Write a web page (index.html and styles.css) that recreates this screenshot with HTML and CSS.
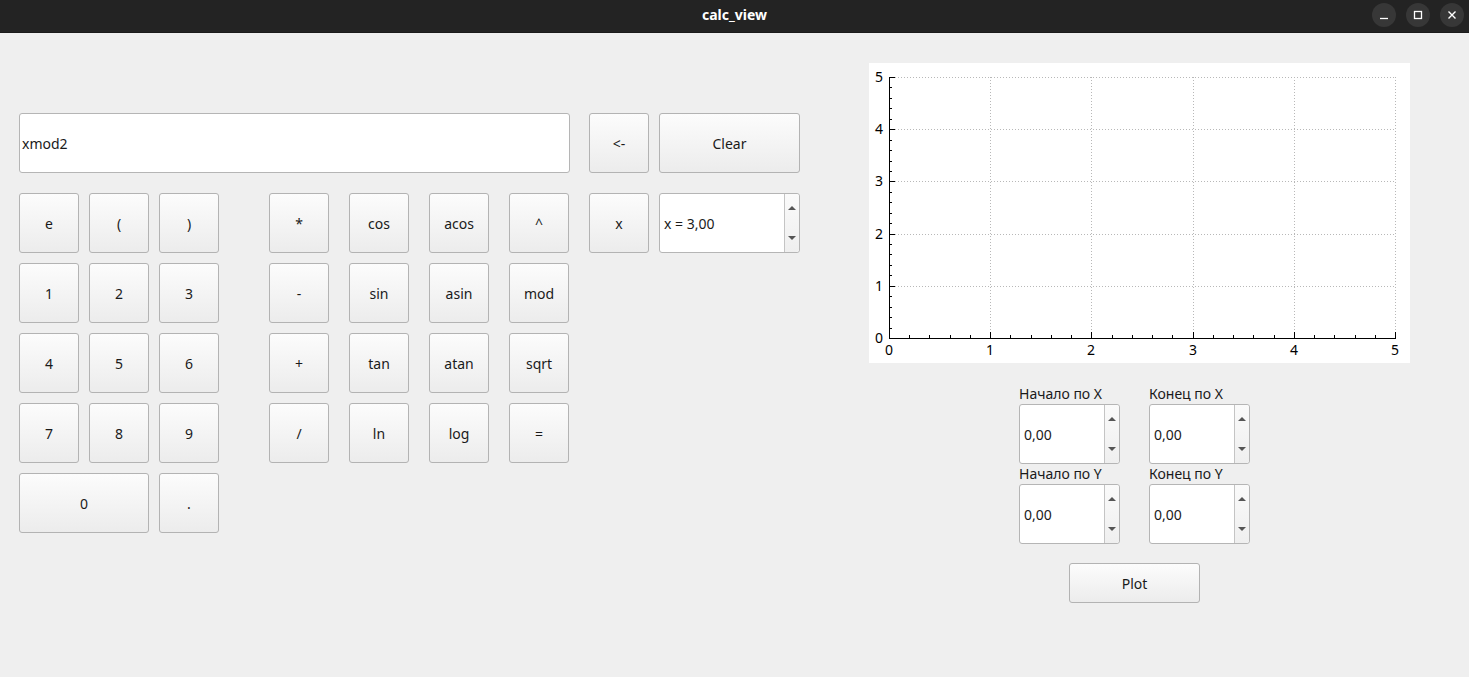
FILE: index.html
```html
<!DOCTYPE html>
<html lang="ru">
<head>
<meta charset="utf-8">
<title>calc_view</title>
<link rel="stylesheet" href="styles.css">
</head>
<body>
<header class="titlebar">
  <span class="title">calc_view</span>
  <div class="wbtns">
    <span class="wbtn"><svg width="24" height="24" viewBox="0 0 24 24"><line x1="8" y1="15.5" x2="16" y2="15.5" stroke="#fff" stroke-width="1.3"/></svg></span>
    <span class="wbtn"><svg width="24" height="24" viewBox="0 0 24 24"><rect x="8.5" y="8.5" width="7" height="7" fill="none" stroke="#fff" stroke-width="1.3"/></svg></span>
    <span class="wbtn"><svg width="24" height="24" viewBox="0 0 24 24"><path d="M8.5 8.5 L15.5 15.5 M15.5 8.5 L8.5 15.5" stroke="#fff" stroke-width="1.4"/></svg></span>
  </div>
</header>
<main class="main">
  <section class="calc">
    <div class="toprow">
      <div class="display">xmod2</div>
      <button class="btn back">&lt;-</button>
      <button class="btn wide">Clear</button>
    </div>
    <div class="row">
      <div class="grp"><button class="btn">e</button><button class="btn">(</button><button class="btn">)</button></div>
      <div class="ops"><button class="btn">*</button><button class="btn">cos</button><button class="btn">acos</button><button class="btn">^</button></div>
      <div class="var"><button class="btn">x</button>
        <div class="spin xspin"><span class="val">x = 3,00</span><span class="arrows"><i class="up"></i><i class="down"></i></span></div>
      </div>
    </div>
    <div class="row">
      <div class="grp"><button class="btn">1</button><button class="btn">2</button><button class="btn">3</button></div>
      <div class="ops"><button class="btn">-</button><button class="btn">sin</button><button class="btn">asin</button><button class="btn">mod</button></div>
    </div>
    <div class="row">
      <div class="grp"><button class="btn">4</button><button class="btn">5</button><button class="btn">6</button></div>
      <div class="ops"><button class="btn">+</button><button class="btn">tan</button><button class="btn">atan</button><button class="btn">sqrt</button></div>
    </div>
    <div class="row">
      <div class="grp"><button class="btn">7</button><button class="btn">8</button><button class="btn">9</button></div>
      <div class="ops"><button class="btn">/</button><button class="btn">ln</button><button class="btn">log</button><button class="btn">=</button></div>
    </div>
    <div class="row">
      <div class="grp"><button class="btn zero">0</button><button class="btn">.</button></div>
    </div>
  </section>
  <section class="graph">
    <svg class="plot" width="541" height="300" viewBox="0 0 541 300">
      <rect x="0" y="0" width="541" height="300" fill="#fff"/>
      <g stroke="#b8b8b8" stroke-width="1" stroke-dasharray="1 2" shape-rendering="crispEdges">
        <line x1="121" y1="14" x2="121" y2="275"/>
        <line x1="222" y1="14" x2="222" y2="275"/>
        <line x1="324" y1="14" x2="324" y2="275"/>
        <line x1="425" y1="14" x2="425" y2="275"/>
        <line x1="526" y1="14" x2="526" y2="275"/>
        <line x1="20" y1="223" x2="526" y2="223"/>
        <line x1="20" y1="171" x2="526" y2="171"/>
        <line x1="20" y1="118" x2="526" y2="118"/>
        <line x1="20" y1="66" x2="526" y2="66"/>
        <line x1="20" y1="14" x2="526" y2="14"/>
      </g>
      <g stroke="#000" stroke-width="1" shape-rendering="crispEdges">
        <line x1="20" y1="14" x2="20" y2="276"/>
        <line x1="20" y1="275" x2="527" y2="275"/>
        <line x1="121" y1="275" x2="121" y2="269"/>
        <line x1="222" y1="275" x2="222" y2="269"/>
        <line x1="324" y1="275" x2="324" y2="269"/>
        <line x1="425" y1="275" x2="425" y2="269"/>
        <line x1="526" y1="275" x2="526" y2="269"/>
        <line x1="20" y1="223" x2="26" y2="223"/>
        <line x1="20" y1="171" x2="26" y2="171"/>
        <line x1="20" y1="118" x2="26" y2="118"/>
        <line x1="20" y1="66" x2="26" y2="66"/>
        <line x1="20" y1="14" x2="26" y2="14"/>
      </g>
      <path stroke="#000" stroke-width="1" shape-rendering="crispEdges" fill="none" d="M40 275v-3M60 275v-3M81 275v-3M101 275v-3M141 275v-3M162 275v-3M182 275v-3M202 275v-3M243 275v-3M263 275v-3M283 275v-3M303 275v-3M344 275v-3M364 275v-3M384 275v-3M405 275v-3M445 275v-3M465 275v-3M486 275v-3M506 275v-3M20 265h3M20 254h3M20 244h3M20 233h3M20 212h3M20 202h3M20 191h3M20 181h3M20 160h3M20 150h3M20 139h3M20 129h3M20 108h3M20 98h3M20 87h3M20 77h3M20 56h3M20 45h3M20 35h3M20 24h3"/>
      <g class="ticklbl" text-anchor="end">
        <text x="14" y="280">0</text>
        <text x="14" y="228">1</text>
        <text x="14" y="176">2</text>
        <text x="14" y="123">3</text>
        <text x="14" y="71">4</text>
        <text x="14" y="19">5</text>
      </g>
      <g class="ticklbl" text-anchor="middle">
        <text x="20" y="292">0</text>
        <text x="121" y="292">1</text>
        <text x="222" y="292">2</text>
        <text x="324" y="292">3</text>
        <text x="425" y="292">4</text>
        <text x="526" y="292">5</text>
      </g>
    </svg>
    <div class="range">
      <div class="field"><label class="lbl">Начало по X</label>
        <div class="spin rspin"><span class="val">0,00</span><span class="arrows"><i class="up"></i><i class="down"></i></span></div></div>
      <div class="field"><label class="lbl">Конец по X</label>
        <div class="spin rspin"><span class="val">0,00</span><span class="arrows"><i class="up"></i><i class="down"></i></span></div></div>
      <div class="field"><label class="lbl">Начало по Y</label>
        <div class="spin rspin"><span class="val">0,00</span><span class="arrows"><i class="up"></i><i class="down"></i></span></div></div>
      <div class="field"><label class="lbl">Конец по Y</label>
        <div class="spin rspin"><span class="val">0,00</span><span class="arrows"><i class="up"></i><i class="down"></i></span></div></div>
    </div>
    <button class="btn plotbtn">Plot</button>
  </section>
</main>
</body>
</html>
```
FILE: styles.css
```css
* { box-sizing: border-box; }
html, body { margin: 0; padding: 0; }
body {
  width: 1469px;
  height: 677px;
  overflow: hidden;
  background: #efefef;
  font-family: "Noto Sans", "DejaVu Sans", sans-serif;
  font-size: 14px;
  color: #1a1a1a;
}
.titlebar {
  height: 33px;
  background: #232323;
  border-bottom: 1px solid #1b1b1b;
  display: flex;
  align-items: center;
  justify-content: center;
  position: relative;
}
.title {
  color: #fff;
  font-weight: bold;
  font-size: 14px;
  margin-top: -3px;
}
.wbtns {
  position: absolute;
  right: 5px;
  top: 3px;
  display: flex;
  gap: 10px;
}
.wbtn {
  width: 24px;
  height: 24px;
  border-radius: 50%;
  background: #373737;
  display: flex;
}
.main {
  display: flex;
  align-items: flex-start;
}
.calc {
  margin-left: 19px;
  margin-top: 80px;
  width: 781px;
  display: flex;
  flex-direction: column;
  gap: 10px;
}
.toprow {
  display: flex;
  margin-bottom: 10px;
}
.display {
  width: 551px;
  height: 60px;
  background: #fff;
  border: 1px solid #b5b5b5;
  border-radius: 3px;
  padding-left: 2px;
  display: flex;
  align-items: center;
}
.btn {
  width: 60px;
  height: 60px;
  padding: 0;
  margin: 0;
  border: 1px solid #b3b3b3;
  border-radius: 3px;
  background: linear-gradient(#fcfcfc, #ececec);
  font-family: "Noto Sans", "DejaVu Sans", sans-serif;
  font-size: 14px;
  color: #1a1a1a;
  display: flex;
  align-items: center;
  justify-content: center;
}
.back { margin-left: 19px; }
.wide { width: 141px; margin-left: 10px; }
.zero { width: 130px; }
.row { display: flex; }
.grp { display: flex; gap: 10px; }
.ops { display: flex; gap: 20px; margin-left: 50px; }
.var { display: flex; gap: 10px; margin-left: 20px; }
.spin {
  background: #fff;
  border: 1px solid #b5b5b5;
  border-radius: 3px;
  display: flex;
  align-items: stretch;
}
.spin .val {
  flex: 1;
  display: flex;
  align-items: center;
  padding-left: 4px;
}
.arrows {
  width: 15px;
  border-left: 1px solid #c4c4c4;
  background: linear-gradient(#fafafa, #efefef);
  display: flex;
  flex-direction: column;
  justify-content: space-between;
  align-items: center;
  padding: 12px 0 12px 0;
  border-radius: 0 3px 3px 0;
}
.up, .down {
  display: block;
  width: 0;
  height: 0;
  border-left: 4px solid transparent;
  border-right: 4px solid transparent;
}
.up { border-bottom: 4px solid #555; }
.down { border-top: 4px solid #555; }
.xspin { width: 141px; height: 60px; }
.graph {
  margin-left: 69px;
  margin-top: 30px;
  display: flex;
  flex-direction: column;
}
.plot { display: block; }
.ticklbl text {
  font-family: "Noto Sans", "DejaVu Sans", sans-serif;
  font-size: 14px;
  fill: #000;
}
.range {
  margin-top: 21px;
  margin-left: 150px;
  display: grid;
  grid-template-columns: 101px 101px;
  column-gap: 29px;
}
.field { display: flex; flex-direction: column; }
.lbl {
  height: 20px;
  line-height: 20px;
}
.rspin { width: 101px; height: 60px; }
.rspin .val { padding-left: 4px; padding-top: 1px; }
.plotbtn {
  width: 131px;
  height: 40px;
  margin-top: 19px;
  margin-left: 200px;
}
```
